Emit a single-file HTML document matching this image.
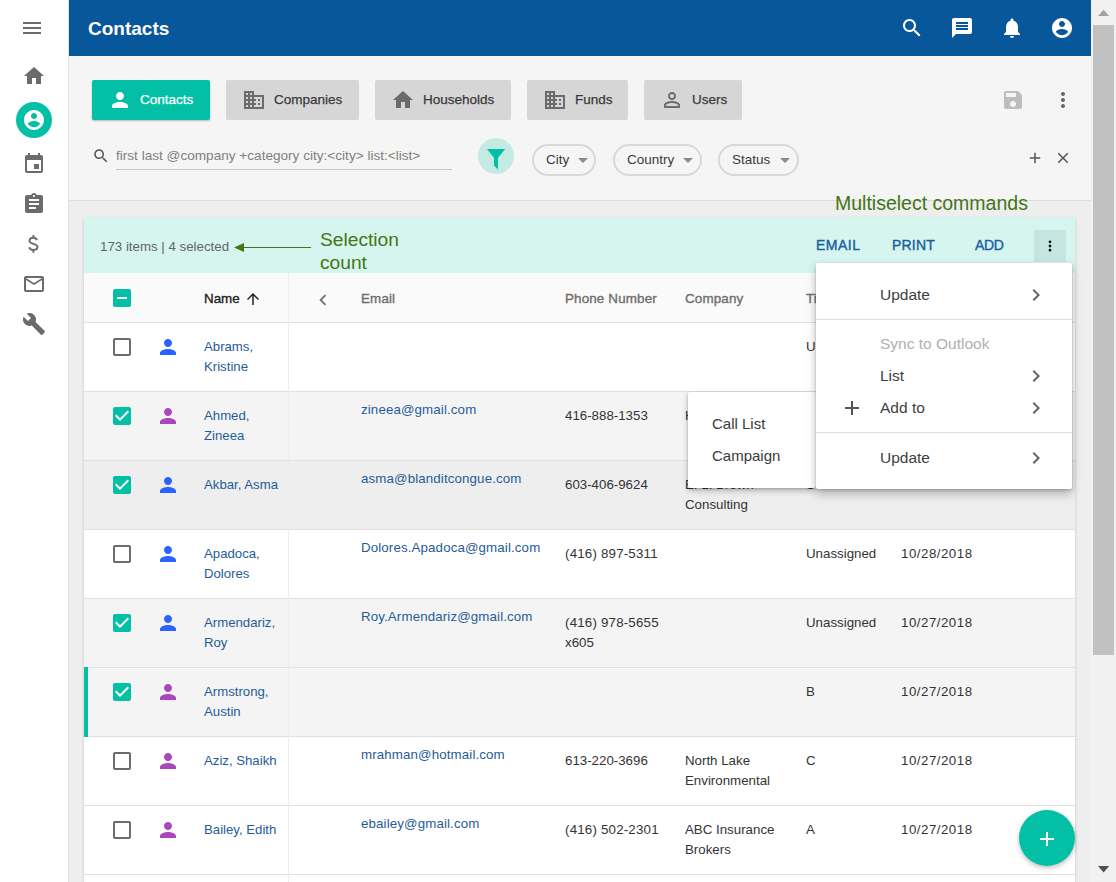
<!DOCTYPE html>
<html><head><meta charset="utf-8">
<style>
*{box-sizing:border-box}
html,body{margin:0;padding:0}
body{width:1116px;height:882px;overflow:hidden;position:relative;background:#f5f5f5;font-family:"Liberation Sans",sans-serif;}
.a{position:absolute}
svg{position:absolute;display:block}
.t{position:absolute;white-space:nowrap;line-height:1}
#side{left:0;top:0;width:69px;height:882px;background:#fff;border-right:1px solid #e2e2e2}
#side svg path{fill:#6b6b6b}
#hdr{left:69px;top:0;width:1022px;height:56px;background:#08579b}
#hdr svg path{fill:#fff}
#tool{left:69px;top:56px;width:1022px;height:145px;background:#f5f5f5;border-bottom:1px solid #dcdcdc}
#content{left:69px;top:201px;width:1022px;height:681px;background:#eeeeee}
#sb{left:1091px;top:0;width:25px;height:882px;background:#f1f1f1}
.btn{position:absolute;top:80px;height:40px;background:#d6d6d6;border-radius:2px}
.btn .lbl{position:absolute;top:12.5px;font-size:13.5px;color:#3a3a3a;white-space:nowrap;line-height:1;-webkit-text-stroke-width:0.25px}
.btn svg path{fill:#6b6b6b}
.chip{position:absolute;top:144px;height:32px;border:2px solid #d8d8d8;border-radius:16px}
.chip .lbl{position:absolute;top:6.5px;font-size:13.5px;color:#3a3a3a;white-space:nowrap;line-height:1}
.chip .tri{position:absolute;top:12px;width:0;height:0;border-left:5px solid transparent;border-right:5px solid transparent;border-top:5px solid #8a8a8a}
#card{left:84px;top:217px;width:991px;height:665px;background:#fff;box-shadow:0 1px 3px rgba(0,0,0,.18)}
</style></head><body>
<div id="side" class="a">
  <svg style="left:20px;top:16px" width="24" height="24" viewBox="0 0 24 24"><path d="M3 18h18v-2H3v2zm0-5h18v-2H3v2zm0-7v2h18V6H3z"/></svg>
  <svg style="left:22px;top:64px" width="24" height="24" viewBox="0 0 24 24"><path d="M10 20v-6h4v6h5v-8h3L12 3 2 12h3v8z"/></svg>
  <div class="a" style="left:16px;top:102px;width:36px;height:36px;border-radius:50%;background:#02bfa6"></div>
  <svg style="left:22px;top:108px" width="24" height="24" viewBox="0 0 24 24"><path style="fill:#fff" d="M12 2C6.48 2 2 6.48 2 12s4.48 10 10 10 10-4.48 10-10S17.52 2 12 2zm0 3c1.66 0 3 1.34 3 3s-1.34 3-3 3-3-1.34-3-3 1.34-3 3-3zm0 14.2c-2.5 0-4.71-1.28-6-3.22.03-1.99 4-3.08 6-3.08 1.99 0 5.97 1.09 6 3.08-1.29 1.94-3.5 3.22-6 3.22z"/></svg>
  <svg style="left:22px;top:152px" width="24" height="24" viewBox="0 0 24 24"><path d="M17 12h-5v5h5v-5zM16 1v2H8V1H6v2H5c-1.11 0-1.99.9-1.99 2L3 19c0 1.1.89 2 2 2h14c1.1 0 2-.9 2-2V5c0-1.1-.9-2-2-2h-1V1h-2zm3 18H5V8h14v11z"/></svg>
  <svg style="left:22px;top:192px" width="24" height="24" viewBox="0 0 24 24"><path d="M19 3h-4.18C14.4 1.84 13.3 1 12 1c-1.3 0-2.4.84-2.82 2H5c-1.1 0-2 .9-2 2v14c0 1.1.9 2 2 2h14c1.1 0 2-.9 2-2V5c0-1.1-.9-2-2-2zm-7 0c.55 0 1 .45 1 1s-.45 1-1 1-1-.45-1-1 .45-1 1-1zm2 14H7v-2h7v2zm3-4H7v-2h10v2zm0-4H7V7h10v2z"/></svg>
  <svg style="left:20px;top:230px" width="30" height="30" viewBox="0 0 30 30"><path style="fill:none;stroke:#6b6b6b;stroke-width:1.9" d="M17 10.2C16.4 8.6 15.1 7.8 13.4 7.8C11.2 7.8 9.5 9 9.5 10.8C9.5 12.6 11 13.2 13.4 13.8C15.9 14.4 17.5 15.2 17.5 17.1C17.5 18.9 15.8 20 13.4 20C11.3 20 9.7 19 9.2 17.3"/><path style="fill:#6b6b6b" d="M12.45 5.1h1.9v2.9h-1.9zM12.45 19.6h1.9v3.2h-1.9z"/></svg>
  <svg style="left:22px;top:272px" width="24" height="24" viewBox="0 0 24 24"><path d="M22 6c0-1.1-.9-2-2-2H4c-1.1 0-2 .9-2 2v12c0 1.1.9 2 2 2h16c1.1 0 2-.9 2-2V6zm-2 0l-8 5-8-5h16zm0 12H4V8l8 5 8-5v10z"/></svg>
  <svg style="left:22px;top:312px" width="24" height="24" viewBox="0 0 24 24"><path d="M22.7 19l-9.1-9.1c.9-2.3.4-5-1.5-6.9-2-2-5-2.4-7.4-1.3L9 6 6 9 1.6 4.7C.4 7.1.9 10.1 2.9 12.1c1.9 1.9 4.6 2.4 6.9 1.5l9.1 9.1c.4.4 1 .4 1.4 0l2.3-2.3c.5-.4.5-1.1.1-1.4z"/></svg>
</div>

<div id="hdr" class="a">
  <div class="t" style="left:19px;top:19px;font-size:19px;font-weight:bold;color:#fff">Contacts</div>
  <svg style="left:831px;top:16px" width="24" height="24" viewBox="0 0 24 24"><path d="M15.5 14h-.79l-.28-.27C15.41 12.59 16 11.11 16 9.5 16 5.91 13.09 3 9.5 3S3 5.91 3 9.5 5.91 16 9.5 16c1.61 0 3.09-.59 4.23-1.57l.27.28v.79l5 4.99L20.49 19l-4.99-5zm-6 0C7.01 14 5 11.99 5 9.5S7.01 5 9.5 5 14 7.01 14 9.5 11.99 14 9.5 14z"/></svg>
  <svg style="left:881px;top:16px" width="24" height="24" viewBox="0 0 24 24"><path d="M20 2H4c-1.1 0-1.99.9-1.99 2L2 22l4-4h14c1.1 0 2-.9 2-2V4c0-1.1-.9-2-2-2zm-2 12H6v-2h12v2zm0-3H6V9h12v2zm0-3H6V6h12v2z"/></svg>
  <svg style="left:931px;top:16px" width="24" height="24" viewBox="0 0 24 24"><path d="M12 22c1.1 0 2-.9 2-2h-4c0 1.1.89 2 2 2zm6-6v-5c0-3.07-1.64-5.64-4.5-6.32V4c0-.83-.67-1.5-1.5-1.5s-1.5.67-1.5 1.5v.68C7.63 5.36 6 7.92 6 11v5l-2 2v1h16v-1l-2-2z"/></svg>
  <svg style="left:981px;top:16px" width="24" height="24" viewBox="0 0 24 24"><path d="M12 2C6.48 2 2 6.48 2 12s4.48 10 10 10 10-4.48 10-10S17.52 2 12 2zm0 3c1.66 0 3 1.34 3 3s-1.34 3-3 3-3-1.34-3-3 1.34-3 3-3zm0 14.2c-2.5 0-4.71-1.28-6-3.22.03-1.99 4-3.08 6-3.08 1.99 0 5.97 1.09 6 3.08-1.29 1.94-3.5 3.22-6 3.22z"/></svg>
</div>

<div id="tool" class="a"></div>
<div id="content" class="a"></div>

<!-- TOOLBAR -->
<div class="btn" style="left:92px;width:118px;background:#02bfa6;box-shadow:0 1px 2px rgba(0,0,0,.25)">
  <svg style="left:16px;top:8px" width="24" height="24" viewBox="0 0 24 24"><path style="fill:#fff" d="M12 12c2.21 0 4-1.79 4-4s-1.79-4-4-4-4 1.79-4 4 1.79 4 4 4zm0 2c-2.67 0-8 1.34-8 4v2h16v-2c0-2.66-5.33-4-8-4z"/></svg>
  <div class="lbl" style="left:48px;color:#fff">Contacts</div>
</div>
<div class="btn" style="left:226px;width:133px">
  <svg style="left:16px;top:8px" width="24" height="24" viewBox="0 0 24 24"><path d="M12 7V3H2v18h20V7H12zM6 19H4v-2h2v2zm0-4H4v-2h2v2zm0-4H4V9h2v2zm0-4H4V5h2v2zm4 12H8v-2h2v2zm0-4H8v-2h2v2zm0-4H8V9h2v2zm0-4H8V5h2v2zm10 12h-8v-2h2v-2h-2v-2h2v-2h-2V9h8v10zm-2-8h-2v2h2v-2zm0 4h-2v2h2v-2z"/></svg>
  <div class="lbl" style="left:48px">Companies</div>
</div>
<div class="btn" style="left:375px;width:136px">
  <svg style="left:16px;top:8px" width="24" height="24" viewBox="0 0 24 24"><path d="M10 20v-6h4v6h5v-8h3L12 3 2 12h3v8z"/></svg>
  <div class="lbl" style="left:48px">Households</div>
</div>
<div class="btn" style="left:527px;width:101px">
  <svg style="left:16px;top:8px" width="24" height="24" viewBox="0 0 24 24"><path d="M12 7V3H2v18h20V7H12zM6 19H4v-2h2v2zm0-4H4v-2h2v2zm0-4H4V9h2v2zm0-4H4V5h2v2zm4 12H8v-2h2v2zm0-4H8v-2h2v2zm0-4H8V9h2v2zm0-4H8V5h2v2zm10 12h-8v-2h2v-2h-2v-2h2v-2h-2V9h8v10zm-2-8h-2v2h2v-2zm0 4h-2v2h2v-2z"/></svg>
  <div class="lbl" style="left:48px">Funds</div>
</div>
<div class="btn" style="left:644px;width:98px">
  <svg style="left:16px;top:8px" width="24" height="24" viewBox="0 0 24 24"><path d="M12 5.9c1.16 0 2.1.94 2.1 2.1s-.94 2.1-2.1 2.1S9.9 9.16 9.9 8s.94-2.1 2.1-2.1m0 9c2.97 0 6.1 1.46 6.1 2.1v1.1H5.9V17c0-.64 3.13-2.1 6.1-2.1M12 4C9.79 4 8 5.79 8 8s1.79 4 4 4 4-1.79 4-4-1.79-4-4-4zm0 9c-2.67 0-8 1.34-8 4v3h16v-3c0-2.66-5.33-4-8-4z"/></svg>
  <div class="lbl" style="left:48px">Users</div>
</div>
<svg style="left:1001px;top:88px" width="24" height="24" viewBox="0 0 24 24"><path style="fill:#bdbdbd" d="M17 3H5c-1.11 0-2 .9-2 2v14c0 1.1.89 2 2 2h14c1.1 0 2-.9 2-2V7l-4-4zm-5 16c-1.66 0-3-1.34-3-3s1.34-3 3-3 3 1.34 3 3-1.34 3-3 3zm3-10H5V5h10v4z"/></svg>
<svg style="left:1051px;top:88px" width="24" height="24" viewBox="0 0 24 24"><path style="fill:#666" d="M12 8c1.1 0 2-.9 2-2s-.9-2-2-2-2 .9-2 2 .9 2 2 2zm0 2c-1.1 0-2 .9-2 2s.9 2 2 2 2-.9 2-2-.9-2-2-2zm0 6c-1.1 0-2 .9-2 2s.9 2 2 2 2-.9 2-2-.9-2-2-2z"/></svg>

<svg style="left:92px;top:147px" width="18" height="18" viewBox="0 0 24 24"><path style="fill:#555" d="M15.5 14h-.79l-.28-.27C15.41 12.59 16 11.11 16 9.5 16 5.91 13.09 3 9.5 3S3 5.91 3 9.5 5.91 16 9.5 16c1.61 0 3.09-.59 4.23-1.57l.27.28v.79l5 4.99L20.49 19l-4.99-5zm-6 0C7.01 14 5 11.99 5 9.5S7.01 5 9.5 5 14 7.01 14 9.5 11.99 14 9.5 14z"/></svg>
<div class="t" style="left:116px;top:148.5px;font-size:13.6px;color:#808080">first last @company +category city:&lt;city&gt; list:&lt;list&gt;</div>
<div class="a" style="left:116px;top:169px;width:336px;height:1px;background:#c8c8c8"></div>
<div class="a" style="left:478px;top:138px;width:36px;height:36px;border-radius:50%;background:#c4eae4"></div>
<svg style="left:478px;top:138px" width="36" height="36" viewBox="0 0 36 36"><path style="fill:#02bfa6" d="M9 11H27.3L20 19.8V31.6L16 27.5V19.8Z"/></svg>

<div class="chip" style="left:532px;width:64px"><div class="lbl" style="left:12px">City</div><div class="tri" style="left:44px"></div></div>
<div class="chip" style="left:613px;width:89px"><div class="lbl" style="left:12px">Country</div><div class="tri" style="left:68px"></div></div>
<div class="chip" style="left:718px;width:81px"><div class="lbl" style="left:12px">Status</div><div class="tri" style="left:60px"></div></div>

<svg style="left:1026px;top:149px" width="18" height="18" viewBox="0 0 24 24"><path style="fill:#555" d="M19 13h-6v6h-2v-6H5v-2h6V5h2v6h6v2z"/></svg>
<svg style="left:1054px;top:149px" width="18" height="18" viewBox="0 0 24 24"><path style="fill:#555" d="M19 6.41L17.59 5 12 10.59 6.41 5 5 6.41 10.59 12 5 17.59 6.41 19 12 13.41 17.59 19 19 17.59 13.41 12z"/></svg>
<!--TOOLBAR_END-->

<!-- CARD -->
<div id="card" class="a"></div>
<div class="a" style="left:84px;top:217px;width:991px;height:56px;background:#d7f5ef"></div>
<div class="a" style="left:84px;top:273px;width:991px;height:49px;background:#fafafa"></div>
<div class="a" style="left:84px;top:322px;width:991px;height:69px;background:#fff"></div>
<div class="a" style="left:84px;top:391px;width:991px;height:69px;background:#f4f4f4"></div>
<div class="a" style="left:84px;top:460px;width:991px;height:69px;background:#eeeeee"></div>
<div class="a" style="left:84px;top:529px;width:991px;height:69px;background:#fff"></div>
<div class="a" style="left:84px;top:598px;width:991px;height:69px;background:#f4f4f4"></div>
<div class="a" style="left:84px;top:667px;width:991px;height:69px;background:#f4f4f4"></div>
<div class="a" style="left:84px;top:736px;width:991px;height:69px;background:#fff"></div>
<div class="a" style="left:84px;top:805px;width:991px;height:69px;background:#fff"></div>
<div class="a" style="left:84px;top:874px;width:991px;height:69px;background:#fff"></div>
<div class="a" style="left:84px;top:322px;width:991px;height:1px;background:#e0e0e0"></div>
<div class="a" style="left:84px;top:391px;width:991px;height:1px;background:#e0e0e0"></div>
<div class="a" style="left:84px;top:460px;width:991px;height:1px;background:#e0e0e0"></div>
<div class="a" style="left:84px;top:529px;width:991px;height:1px;background:#e0e0e0"></div>
<div class="a" style="left:84px;top:598px;width:991px;height:1px;background:#e0e0e0"></div>
<div class="a" style="left:84px;top:667px;width:991px;height:1px;background:#e0e0e0"></div>
<div class="a" style="left:84px;top:736px;width:991px;height:1px;background:#e0e0e0"></div>
<div class="a" style="left:84px;top:805px;width:991px;height:1px;background:#e0e0e0"></div>
<div class="a" style="left:84px;top:874px;width:991px;height:1px;background:#e0e0e0"></div>
<div class="a" style="left:84px;top:943px;width:991px;height:1px;background:#e0e0e0"></div>
<div class="a" style="left:288px;top:273px;width:1px;height:609px;background:#ececec"></div>
<div class="a" style="left:84px;top:667px;width:4px;height:70px;background:#02bfa6"></div>
<div class="t" style="left:100px;top:239.5px;font-size:13.3px;color:#5e6866">173 items | 4 selected</div>
<div class="t" style="left:816px;top:238px;font-size:14px;color:#175ea3;-webkit-text-stroke:0.4px #175ea3;letter-spacing:0.5px">EMAIL</div>
<div class="t" style="left:892px;top:238px;font-size:14px;color:#175ea3;-webkit-text-stroke:0.4px #175ea3;letter-spacing:0.2px">PRINT</div>
<div class="t" style="left:975px;top:238px;font-size:14px;color:#175ea3;-webkit-text-stroke:0.4px #175ea3;letter-spacing:-0.4px">ADD</div>
<div class="a" style="left:1034px;top:230px;width:32px;height:32px;background:#c5e6e0;border-radius:2px"></div>
<svg style="left:1038px;top:234px" width="24" height="24" viewBox="0 0 24 24"><path style="fill:#111" d="M12 8c1.1 0 2-.9 2-2s-.9-2-2-2-2 .9-2 2 .9 2 2 2zm0 2c-1.1 0-2 .9-2 2s.9 2 2 2 2-.9 2-2-.9-2-2-2zm0 6c-1.1 0-2 .9-2 2s.9 2 2 2 2-.9 2-2-.9-2-2-2z" transform="translate(12 12) scale(.7) translate(-12 -12)"/></svg>
<div class="a" style="left:113px;top:289px;width:18px;height:18px;background:#02bfa6;border-radius:2px"><div class="a" style="left:4px;top:8px;width:10px;height:2px;background:#fff"></div></div>
<div class="t" style="left:204px;top:292px;font-size:13.4px;color:#222;-webkit-text-stroke:0.35px #222">Name</div>
<svg style="left:244px;top:290px" width="18" height="18" viewBox="0 0 24 24"><path style="fill:#222" d="M4 12l1.41 1.41L11 7.83V20h2V7.83l5.58 5.59L20 12l-8-8-8 8z"/></svg>
<svg style="left:312px;top:288.5px" width="22" height="22" viewBox="0 0 24 24"><path style="fill:#707070" d="M15.41 16.59L10.83 12l4.58-4.59L14 6l-6 6 6 6 1.41-1.41z"/></svg>
<div class="t" style="left:361px;top:292px;font-size:13.4px;color:#6e6e6e;-webkit-text-stroke:0.35px #6e6e6e;letter-spacing:0.15px">Email</div>
<div class="t" style="left:565px;top:292px;font-size:13.4px;color:#6e6e6e;-webkit-text-stroke:0.35px #6e6e6e;letter-spacing:0.15px">Phone Number</div>
<div class="t" style="left:685px;top:292px;font-size:13.4px;color:#6e6e6e;-webkit-text-stroke:0.35px #6e6e6e;letter-spacing:0.15px">Company</div>
<div class="t" style="left:806px;top:292px;font-size:13.4px;color:#6e6e6e;-webkit-text-stroke:0.35px #6e6e6e;letter-spacing:0.15px">Title</div>
<svg style="left:110px;top:335px" width="24" height="24" viewBox="0 0 24 24"><path style="fill:#6b6b6b" d="M19 5v14H5V5h14m0-2H5c-1.1 0-2 .9-2 2v14c0 1.1.9 2 2 2h14c1.1 0 2-.9 2-2V5c0-1.1-.9-2-2-2z"/></svg>
<svg style="left:156px;top:335px" width="24" height="24" viewBox="0 0 24 24"><path style="fill:#2962ff" d="M12 12c2.21 0 4-1.79 4-4s-1.79-4-4-4-4 1.79-4 4 1.79 4 4 4zm0 2c-2.67 0-8 1.34-8 4v2h16v-2c0-2.66-5.33-4-8-4z"/></svg>
<div class="t" style="left:204px;top:340px;font-size:13.2px;color:#1f5c99">Abrams,</div>
<div class="t" style="left:204px;top:360px;font-size:13.2px;color:#1f5c99">Kristine</div>
<div class="t" style="left:806px;top:340px;font-size:13.3px;color:#333">Unassigned</div>
<svg style="left:110px;top:404px" width="24" height="24" viewBox="0 0 24 24"><path style="fill:#02bfa6" d="M19 3H5c-1.11 0-2 .9-2 2v14c0 1.1.89 2 2 2h14c1.11 0 2-.9 2-2V5c0-1.1-.89-2-2-2z"/><path style="fill:#fff" d="M10 17l-5-5 1.41-1.41L10 14.17l7.59-7.59L19 8l-9 9z"/></svg>
<svg style="left:156px;top:404px" width="24" height="24" viewBox="0 0 24 24"><path style="fill:#ab47bc" d="M12 12c2.21 0 4-1.79 4-4s-1.79-4-4-4-4 1.79-4 4 1.79 4 4 4zm0 2c-2.67 0-8 1.34-8 4v2h16v-2c0-2.66-5.33-4-8-4z"/></svg>
<div class="t" style="left:204px;top:409px;font-size:13.2px;color:#1f5c99">Ahmed,</div>
<div class="t" style="left:204px;top:429px;font-size:13.2px;color:#1f5c99">Zineea</div>
<div class="t" style="left:361px;top:403px;font-size:13.3px;color:#1f5c99;letter-spacing:0.13px">zineea@gmail.com</div>
<div class="t" style="left:565px;top:409px;font-size:13.3px;color:#333;letter-spacing:0">416-888-1353</div>
<div class="t" style="left:685px;top:409px;font-size:13.3px;color:#333">H</div>
<svg style="left:110px;top:473px" width="24" height="24" viewBox="0 0 24 24"><path style="fill:#02bfa6" d="M19 3H5c-1.11 0-2 .9-2 2v14c0 1.1.89 2 2 2h14c1.11 0 2-.9 2-2V5c0-1.1-.89-2-2-2z"/><path style="fill:#fff" d="M10 17l-5-5 1.41-1.41L10 14.17l7.59-7.59L19 8l-9 9z"/></svg>
<svg style="left:156px;top:473px" width="24" height="24" viewBox="0 0 24 24"><path style="fill:#2962ff" d="M12 12c2.21 0 4-1.79 4-4s-1.79-4-4-4-4 1.79-4 4 1.79 4 4 4zm0 2c-2.67 0-8 1.34-8 4v2h16v-2c0-2.66-5.33-4-8-4z"/></svg>
<div class="t" style="left:204px;top:478px;font-size:13.2px;color:#1f5c99">Akbar, Asma</div>
<div class="t" style="left:361px;top:472px;font-size:13.3px;color:#1f5c99;letter-spacing:0.13px">asma@blanditcongue.com</div>
<div class="t" style="left:565px;top:478px;font-size:13.3px;color:#333;letter-spacing:0">603-406-9624</div>
<div class="t" style="left:685px;top:478px;font-size:13.3px;color:#333">E. L. Brown</div>
<div class="t" style="left:685px;top:498px;font-size:13.3px;color:#333">Consulting</div>
<div class="t" style="left:806px;top:478px;font-size:13.3px;color:#333">S</div>
<div class="t" style="left:901px;top:478px;font-size:13.3px;color:#333;letter-spacing:0.5px">10/27/2018</div>
<svg style="left:110px;top:542px" width="24" height="24" viewBox="0 0 24 24"><path style="fill:#6b6b6b" d="M19 5v14H5V5h14m0-2H5c-1.1 0-2 .9-2 2v14c0 1.1.9 2 2 2h14c1.1 0 2-.9 2-2V5c0-1.1-.9-2-2-2z"/></svg>
<svg style="left:156px;top:542px" width="24" height="24" viewBox="0 0 24 24"><path style="fill:#2962ff" d="M12 12c2.21 0 4-1.79 4-4s-1.79-4-4-4-4 1.79-4 4 1.79 4 4 4zm0 2c-2.67 0-8 1.34-8 4v2h16v-2c0-2.66-5.33-4-8-4z"/></svg>
<div class="t" style="left:204px;top:547px;font-size:13.2px;color:#1f5c99">Apadoca,</div>
<div class="t" style="left:204px;top:567px;font-size:13.2px;color:#1f5c99">Dolores</div>
<div class="t" style="left:361px;top:541px;font-size:13.3px;color:#1f5c99;letter-spacing:0.13px">Dolores.Apadoca@gmail.com</div>
<div class="t" style="left:565px;top:547px;font-size:13.3px;color:#333;letter-spacing:0.2px">(416) 897-5311</div>
<div class="t" style="left:806px;top:547px;font-size:13.3px;color:#333">Unassigned</div>
<div class="t" style="left:901px;top:547px;font-size:13.3px;color:#333;letter-spacing:0.5px">10/28/2018</div>
<svg style="left:110px;top:611px" width="24" height="24" viewBox="0 0 24 24"><path style="fill:#02bfa6" d="M19 3H5c-1.11 0-2 .9-2 2v14c0 1.1.89 2 2 2h14c1.11 0 2-.9 2-2V5c0-1.1-.89-2-2-2z"/><path style="fill:#fff" d="M10 17l-5-5 1.41-1.41L10 14.17l7.59-7.59L19 8l-9 9z"/></svg>
<svg style="left:156px;top:611px" width="24" height="24" viewBox="0 0 24 24"><path style="fill:#2962ff" d="M12 12c2.21 0 4-1.79 4-4s-1.79-4-4-4-4 1.79-4 4 1.79 4 4 4zm0 2c-2.67 0-8 1.34-8 4v2h16v-2c0-2.66-5.33-4-8-4z"/></svg>
<div class="t" style="left:204px;top:616px;font-size:13.2px;color:#1f5c99">Armendariz,</div>
<div class="t" style="left:204px;top:636px;font-size:13.2px;color:#1f5c99">Roy</div>
<div class="t" style="left:361px;top:610px;font-size:13.3px;color:#1f5c99;letter-spacing:0.13px">Roy.Armendariz@gmail.com</div>
<div class="t" style="left:565px;top:616px;font-size:13.3px;color:#333;letter-spacing:0.2px">(416) 978-5655</div>
<div class="t" style="left:565px;top:636px;font-size:13.3px;color:#333;letter-spacing:0">x605</div>
<div class="t" style="left:806px;top:616px;font-size:13.3px;color:#333">Unassigned</div>
<div class="t" style="left:901px;top:616px;font-size:13.3px;color:#333;letter-spacing:0.5px">10/27/2018</div>
<svg style="left:110px;top:680px" width="24" height="24" viewBox="0 0 24 24"><path style="fill:#02bfa6" d="M19 3H5c-1.11 0-2 .9-2 2v14c0 1.1.89 2 2 2h14c1.11 0 2-.9 2-2V5c0-1.1-.89-2-2-2z"/><path style="fill:#fff" d="M10 17l-5-5 1.41-1.41L10 14.17l7.59-7.59L19 8l-9 9z"/></svg>
<svg style="left:156px;top:680px" width="24" height="24" viewBox="0 0 24 24"><path style="fill:#ab47bc" d="M12 12c2.21 0 4-1.79 4-4s-1.79-4-4-4-4 1.79-4 4 1.79 4 4 4zm0 2c-2.67 0-8 1.34-8 4v2h16v-2c0-2.66-5.33-4-8-4z"/></svg>
<div class="t" style="left:204px;top:685px;font-size:13.2px;color:#1f5c99">Armstrong,</div>
<div class="t" style="left:204px;top:705px;font-size:13.2px;color:#1f5c99">Austin</div>
<div class="t" style="left:806px;top:685px;font-size:13.3px;color:#333">B</div>
<div class="t" style="left:901px;top:685px;font-size:13.3px;color:#333;letter-spacing:0.5px">10/27/2018</div>
<svg style="left:110px;top:749px" width="24" height="24" viewBox="0 0 24 24"><path style="fill:#6b6b6b" d="M19 5v14H5V5h14m0-2H5c-1.1 0-2 .9-2 2v14c0 1.1.9 2 2 2h14c1.1 0 2-.9 2-2V5c0-1.1-.9-2-2-2z"/></svg>
<svg style="left:156px;top:749px" width="24" height="24" viewBox="0 0 24 24"><path style="fill:#ab47bc" d="M12 12c2.21 0 4-1.79 4-4s-1.79-4-4-4-4 1.79-4 4 1.79 4 4 4zm0 2c-2.67 0-8 1.34-8 4v2h16v-2c0-2.66-5.33-4-8-4z"/></svg>
<div class="t" style="left:204px;top:754px;font-size:13.2px;color:#1f5c99">Aziz, Shaikh</div>
<div class="t" style="left:361px;top:748px;font-size:13.3px;color:#1f5c99;letter-spacing:0.13px">mrahman@hotmail.com</div>
<div class="t" style="left:565px;top:754px;font-size:13.3px;color:#333;letter-spacing:0">613-220-3696</div>
<div class="t" style="left:685px;top:754px;font-size:13.3px;color:#333">North Lake</div>
<div class="t" style="left:685px;top:774px;font-size:13.3px;color:#333">Environmental</div>
<div class="t" style="left:806px;top:754px;font-size:13.3px;color:#333">C</div>
<div class="t" style="left:901px;top:754px;font-size:13.3px;color:#333;letter-spacing:0.5px">10/27/2018</div>
<svg style="left:110px;top:818px" width="24" height="24" viewBox="0 0 24 24"><path style="fill:#6b6b6b" d="M19 5v14H5V5h14m0-2H5c-1.1 0-2 .9-2 2v14c0 1.1.9 2 2 2h14c1.1 0 2-.9 2-2V5c0-1.1-.9-2-2-2z"/></svg>
<svg style="left:156px;top:818px" width="24" height="24" viewBox="0 0 24 24"><path style="fill:#ab47bc" d="M12 12c2.21 0 4-1.79 4-4s-1.79-4-4-4-4 1.79-4 4 1.79 4 4 4zm0 2c-2.67 0-8 1.34-8 4v2h16v-2c0-2.66-5.33-4-8-4z"/></svg>
<div class="t" style="left:204px;top:823px;font-size:13.2px;color:#1f5c99">Bailey, Edith</div>
<div class="t" style="left:361px;top:817px;font-size:13.3px;color:#1f5c99;letter-spacing:0.13px">ebailey@gmail.com</div>
<div class="t" style="left:565px;top:823px;font-size:13.3px;color:#333;letter-spacing:0.2px">(416) 502-2301</div>
<div class="t" style="left:685px;top:823px;font-size:13.3px;color:#333">ABC Insurance</div>
<div class="t" style="left:685px;top:843px;font-size:13.3px;color:#333">Brokers</div>
<div class="t" style="left:806px;top:823px;font-size:13.3px;color:#333">A</div>
<div class="t" style="left:901px;top:823px;font-size:13.3px;color:#333;letter-spacing:0.5px">10/27/2018</div>
<svg style="left:110px;top:887px" width="24" height="24" viewBox="0 0 24 24"><path style="fill:#6b6b6b" d="M19 5v14H5V5h14m0-2H5c-1.1 0-2 .9-2 2v14c0 1.1.9 2 2 2h14c1.1 0 2-.9 2-2V5c0-1.1-.9-2-2-2z"/></svg>
<svg style="left:156px;top:887px" width="24" height="24" viewBox="0 0 24 24"><path style="fill:#ab47bc" d="M12 12c2.21 0 4-1.79 4-4s-1.79-4-4-4-4 1.79-4 4 1.79 4 4 4zm0 2c-2.67 0-8 1.34-8 4v2h16v-2c0-2.66-5.33-4-8-4z"/></svg>
<div class="t" style="left:204px;top:892px;font-size:13.2px;color:#1f5c99">Baker, Sam</div>
<div class="t" style="left:835px;top:193.5px;font-size:19.5px;color:#437516">Multiselect commands</div>
<div class="t" style="left:320px;top:227.5px;font-size:19.2px;color:#437516;line-height:23px">Selection<br>count</div>
<svg style="left:230px;top:240px" width="84" height="14" viewBox="0 0 84 14"><path style="fill:#437516" d="M4 7.5L14 3V6.9H81V8.1H14V12Z"/></svg>
<div class="a" style="left:688px;top:392px;width:128px;height:96px;background:#fff;border-radius:2px;box-shadow:0 3px 6px rgba(0,0,0,.22),0 1px 3px rgba(0,0,0,.2)"></div>
<div class="t" style="left:712px;top:416px;font-size:15px;color:#3a3a3a">Call List</div>
<div class="t" style="left:712px;top:448px;font-size:15px;color:#3a3a3a">Campaign</div>
<div class="a" style="left:816px;top:263px;width:256px;height:226px;background:#fff;border-radius:2px;box-shadow:0 5px 10px rgba(0,0,0,.26),0 1px 3px rgba(0,0,0,.2)"></div>
<div class="t" style="left:880px;top:287px;font-size:15.5px;color:#404040">Update</div><svg style="left:1024px;top:283px" width="24" height="24" viewBox="0 0 24 24"><path style="fill:#666" d="M8.59 16.59L13.17 12 8.59 7.41 10 6l6 6-6 6-1.41-1.41z"/></svg>
<div class="a" style="left:816px;top:319px;width:256px;height:1px;background:#e0e0e0"></div>
<div class="t" style="left:880px;top:335.5px;font-size:15.5px;color:#b0b0b0">Sync to Outlook</div>
<div class="t" style="left:880px;top:367.5px;font-size:15.5px;color:#404040">List</div><svg style="left:1024px;top:363.5px" width="24" height="24" viewBox="0 0 24 24"><path style="fill:#666" d="M8.59 16.59L13.17 12 8.59 7.41 10 6l6 6-6 6-1.41-1.41z"/></svg>
<div class="t" style="left:880px;top:400px;font-size:15.5px;color:#404040">Add to</div><svg style="left:1024px;top:396px" width="24" height="24" viewBox="0 0 24 24"><path style="fill:#666" d="M8.59 16.59L13.17 12 8.59 7.41 10 6l6 6-6 6-1.41-1.41z"/></svg>
<svg style="left:840px;top:396px" width="24" height="24" viewBox="0 0 24 24"><path style="fill:#555" d="M19 13h-6v6h-2v-6H5v-2h6V5h2v6h6v2z"/></svg>
<div class="a" style="left:816px;top:432px;width:256px;height:1px;background:#e0e0e0"></div>
<div class="t" style="left:880px;top:449.5px;font-size:15.5px;color:#404040">Update</div><svg style="left:1024px;top:445.5px" width="24" height="24" viewBox="0 0 24 24"><path style="fill:#666" d="M8.59 16.59L13.17 12 8.59 7.41 10 6l6 6-6 6-1.41-1.41z"/></svg>
<div class="a" style="left:1019px;top:810px;width:56px;height:56px;border-radius:50%;background:#02bfa6;box-shadow:0 2px 5px rgba(0,0,0,.26)"></div>
<svg style="left:1035px;top:827px" width="24" height="24" viewBox="0 0 24 24"><path style="fill:#fff" d="M19 13h-6v6h-2v-6H5v-2h6V5h2v6h6v2z"/></svg>
<!--CARD_END-->

<div id="sb" class="a">
  <svg style="left:1px;top:0" width="24" height="20" viewBox="0 0 24 20"><path style="fill:#a3a3a3" d="M6 16H17.2L11.6 9.8Z"/></svg>
  <div class="a" style="left:2px;top:25px;width:21px;height:630px;background:#c1c1c1"></div>
  <svg style="left:1px;top:860px" width="24" height="20" viewBox="0 0 24 20"><path style="fill:#505050" d="M6 6H17.2L11.6 12.4Z"/></svg>
</div>
</body></html>
